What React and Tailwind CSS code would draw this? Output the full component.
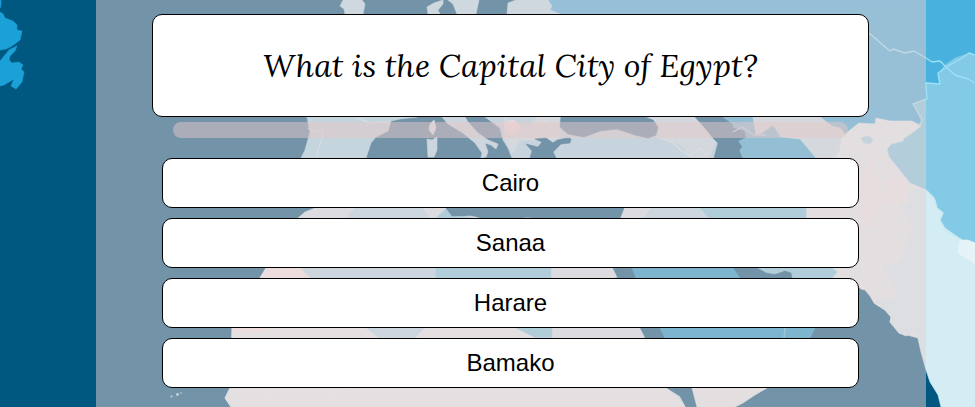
const SHAPES = [
  // Greenland fragments
  ["#1ba0d8", "0,0 1,0 1,5 0,8"],
  ["#1ba0d8", "0,12 3,14 5,18 13,21 17,25 17,30 22,31 20,40 12,46 6,49 0,50"],
  ["#1ba0d8", "0,61 9,50 17,46 15,51 10,56 9,60 12,63 19,62 23,65 21,69 24,72 22,82 16,89 11,86 14,79 4,85 0,86"],
  // Northern Europe
  ["#b8dfee", "343,0 340,6 344,9 345,14 363,14 365,4 362,0"],
  ["#b8dfee", "428,14 427,7 434,3 443,0 443,4 438,10 440,14"],
  ["#b8dfee", "448,0 479,0 476,14 457,14 453,4"],
  ["#48b1de", "516,0 926,0 975,0 975,130 700,130 556,14"],
  ["#b8dfee", "507,14 508,3 516,0 548,0 552,6 550,10 560,14"],
  // Iberia, France, Italy and the islands
  ["#a4daec", "307,117 310,132 305,150 301,158 366,158 371,143 376,137 388,131 391,121 400,119 417,117"],
  ["#c8e4ef", "430,124 434,120 436,128 433,135 429,130"],
  ["#b4dcec", "427,139 432,140 437,137 437,150 434,157 428,157"],
  ["#b4dcec", "442,117 448,124 463,133 475,143 482,153 481,158 486,157 488,152 485,143 491,145 496,149 498,144 488,140 478,133 468,122 465,117"],
  // Balkans, Anatolia and the Caucasus
  ["#a8d9ea", "485,117 500,128 503,140 508,148 512,158 720,158 720,117"],
  ["#c4e2ec", "505,117 514,124 529,126 537,117 560,117 560,140 520,140 512,154 504,138"],
  ["#efe2e6", "504,123 514,120 520,126 517,133 510,136 505,129"],
  ["#bfe0ed", "650,117 696,117 715,142 714,147 709,158 690,158 681,145 660,136"],
  ["#005880", "526,144 538,147 542,142 535,139 546,138 553,143 557,140 568,138 571,139 570,143 561,144 553,152 556,158 530,158 532,151"],
  ["#005880", "561,117 560,127 568,134 584,137 600,131 617,129 635,135 648,138 656,135 658,127 653,120 645,117"],
  // Central Asia
  ["#40acd9", "720,117 870,117 870,160 720,160"],
  ["#c4e2ec", "753,117 820,117 832,126 840,128 848,138 842,158 816,158 800,139 781,137 773,125 762,133 756,135"],
  ["#005880", "695,117 705,128 713,138 718,143 714,158 742,158 739,150 742,147 738,141 746,137 744,131 733,128 732,124 722,117"],
  // Turkestan, Iran and the subcontinent
  ["#82cae6", "922,122 913,104 926,99 926,83 940,84 938,75 945,65 955,58 970,53 975,55 975,250 926,215 880,170 880,145"],
  ["#e1edf1", "805,208 840,150 842,137 850,130 859,123 875,124 876,118 890,121 912,121 921,126 912,133 904,138 903,141 891,144 887,149 889,157 898,168 910,183 926,190 926,340 899,333 890,322 891,317 885,310 874,303 870,296 865,290 861,289 850,278 830,278 805,218"],
  ["#d4edf4", "890,190 926,190 935,200 937,208 943,213 940,220 945,228 962,240 975,243 975,407 941,407 938,395 930,382 926,370 921,352 916,330 906,336 899,333 890,322 891,317 885,310 874,303 882,299 899,299 893,282 886,272 888,264 900,262 907,245 912,223 900,205"],
  ["#e1edf1", "885,188 893,198 900,205 912,223 907,245 900,262 885,265"],
  ["#e6f4f9", "960,240 968,240 975,243 975,264 967,259 958,253"],
  ["#a6d6e8", "861,138 868,136 873,139 870,144 864,143"],
  ["#e9ebee", "864,170 872,160 877,180 881,200 872,225 863,228 859,210"],
  ["#e9ebee", "885,180 900,177 908,186 908,204 893,203 880,202"],
  // North Africa
  ["#d0e7f0", "298,218 305,212 315,208 446,208 450,218 470,216 480,218 620,218 624,208 660,208 660,268 613,278 645,338 667,388 680,396 686,407 231,407 225,398 230,388 232,338 232,328 260,278 266,268"],
  ["#b4dcec", "355,208 422,208 430,218 436,268 436,278 425,328 415,338 378,338 366,328 302,278 302,268"],
  ["#7ccae4", "436,218 447,208 452,216 470,217 478,220 550,220 552,338 535,338 515,328 480,310 436,278"],
  ["#e2eef2", "232,328 366,328 378,338 415,338 425,328 515,328 535,338 645,338 667,388 686,407 231,407 225,398 230,388"],
  ["#f2e8ec", "266,268 300,268 310,278 280,320 264,332 232,332 260,278"],
  ["#005880", "446,208 624,208 620,218 533,218 527,216 522,218 480,218 472,214 452,216"],
  // Arabian peninsula
  ["#b4dcec", "643,218 652,208 705,208 715,218"],
  ["#7ccae4", "700,208 806,208 806,218 709,218"],
  ["#005880", "613,268 633,268 665,330 692,388 697,407 686,407 680,396 667,388 645,338 645,328 618,278"],
  ["#159ace", "632,268 733,268 765,315 815,328 810,338 665,338 660,328 636,278"],
  ["#7ccae4", "757,268 832,268 837,272 832,278 792,278 785,271 775,274 766,273"],
  ["#005880", "733,268 757,268 766,273 775,275 785,271 791,273 792,278 745,278"],
  ["#e1edf1", "692,388 767,388 755,395 743,403 735,407 697,407"],
];

const BORDERS = [
  ["#9be0f7", "869,33 890,51 893,49 905,53 914,51 926,58 932,62 940,61 946,67 955,75 968,79 975,83"],
  ["#9be0f7", "946,67 955,62 962,58 969,53 975,55"],
  ["#9be0f7", "945,68 938,73 940,84 926,83 927,99 913,104 922,119 920,126"],
  ["#c8e8f2", "926,190 934,198 937,208 943,213 940,220 945,230 962,240"],
  ["#c8e8f2", "308,128 315,132 323,130 321,142 318,149 317,158"],
  ["#c8e8f2", "357,118 370,123 390,122"],
  ["#cfe9f1", "656,136 672,142 682,151 690,156 700,148 709,155"],
  ["#cfe9f1", "531,125 545,121 558,136 550,138"],
  ["#9fd5ea", "733,132 742,127 754,135 766,135"],
  ["#5bbbe0", "785,328 784,338"],
  ["#e8f2f5", "265,389 268,407"],
  ["#e8f2f5", "325,396 350,392 368,397 370,407"],
  ["#e8f2f5", "643,388 642,407"],
];

function WorldMap() {
  return (
    <svg className="absolute inset-0 h-[407px] w-[975px]" viewBox="0 0 975 407" aria-hidden="true">
      {SHAPES.map(([fill, points], i) => (
        <polygon key={i} fill={fill} stroke={fill} strokeWidth="0.6" strokeLinejoin="round" points={points} />
      ))}
      {BORDERS.map(([stroke, points], i) => (
        <polyline key={i} fill="none" stroke={stroke} strokeWidth="1.4" strokeLinejoin="round" points={points} />
      ))}
      <g fill="#a4daec">
        <circle cx="171.5" cy="396.5" r="1" />
        <circle cx="177.5" cy="394.5" r="1.4" />
        <circle cx="181" cy="393" r="0.8" />
      </g>
    </svg>
  );
}

const ANSWERS = ["Cairo", "Sanaa", "Harare", "Bamako"];

export default function App() {
  return (
    <div className="relative h-[407px] w-[975px] overflow-hidden bg-[#005880]">
      <WorldMap />
      <main className="relative ml-24 flex h-full w-[830px] flex-col bg-[rgb(230_208_208/0.5)] pt-3.5 pl-14">
        <section className="flex h-[103px] w-[717px] shrink-0 items-center justify-center rounded-[10px] border border-black bg-white">
          <h1 className="font-['Lora','Liberation_Serif',serif] text-[32px] tracking-[0.1px] whitespace-nowrap text-black italic">
            What is the Capital City of Egypt?
          </h1>
        </section>
        <div className="mt-[5px] ml-[21px] h-4 w-[675px] shrink-0 rounded-full bg-[rgb(228_200_200/0.5)]" />
        <div className="mt-5 ml-2.5 flex w-[697px] flex-col gap-2.5">
          {ANSWERS.map((answer) => (
            <button
              key={answer}
              className="h-[50px] rounded-[10px] border border-black bg-white font-['Liberation_Sans',Arial,sans-serif] text-2xl text-black"
            >
              {answer}
            </button>
          ))}
        </div>
      </main>
    </div>
  );
}
